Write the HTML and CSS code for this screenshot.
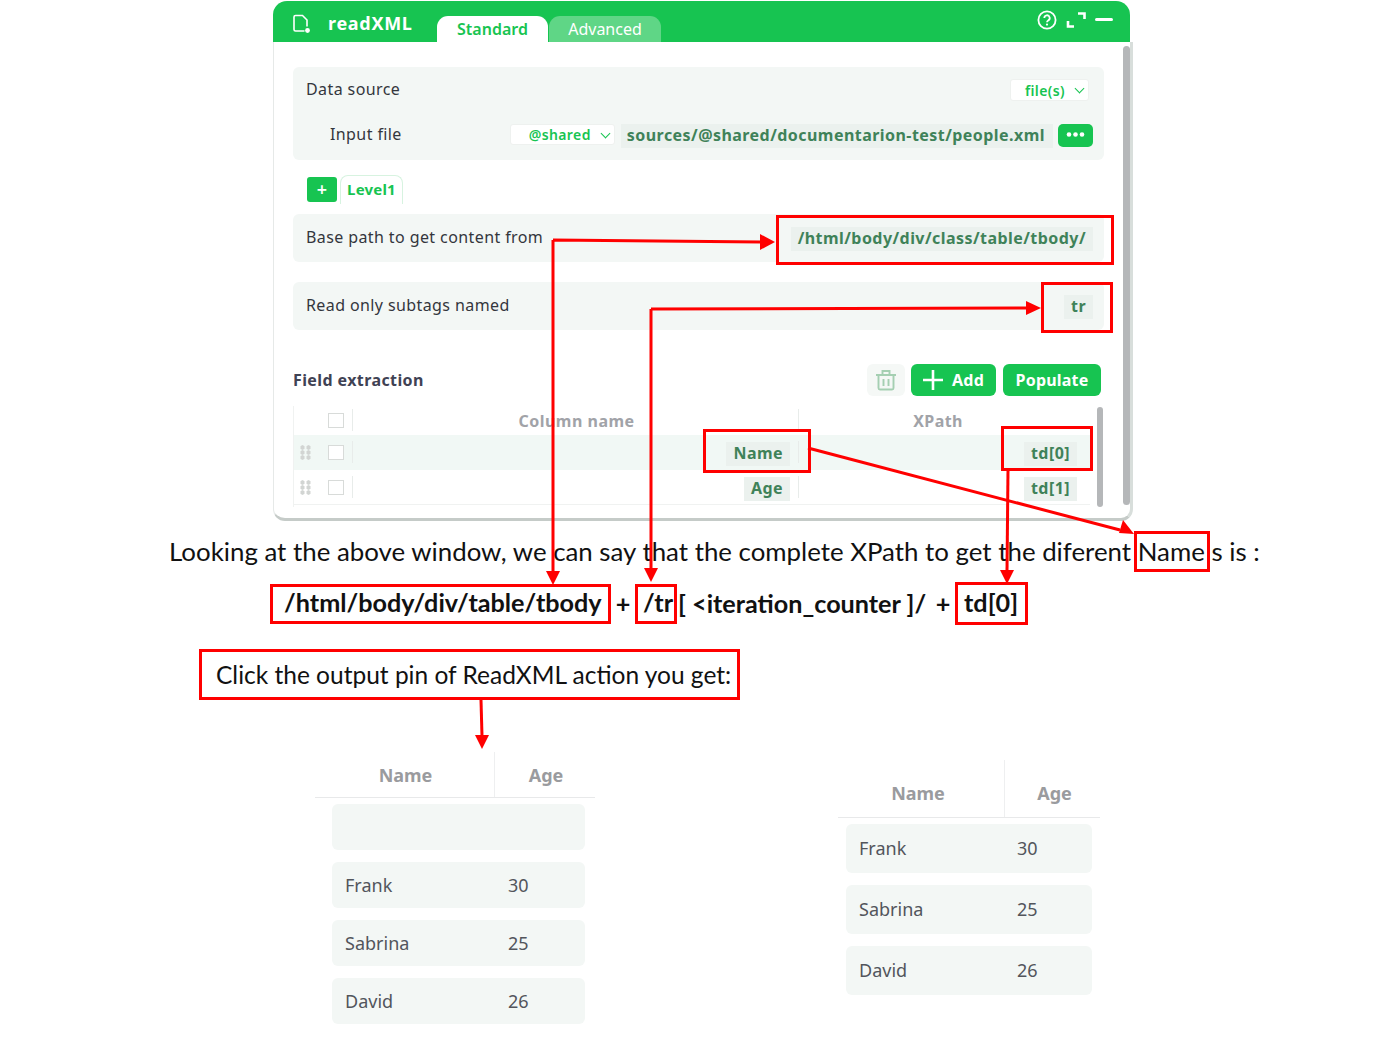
FILE: index.html

```html
<!DOCTYPE html>
<html lang="en">
<head>
    <meta charset="UTF-8">
    <meta name="viewport" content="width=device-width, initial-scale=1.0">
    <title>readXML</title>
    <link rel="stylesheet" href="styles.css">
</head>
<body>
    <div class="page">
        <div class="window">
            <div class="window-header">
                <svg class="logo" width="20" height="20" viewBox="0 0 20 20" fill="none" stroke="#fff" stroke-width="1.600">
                    <path d="M12.500 17H3.500A1.500 1.500 0 0 1 2 15.500V3a1.500 1.500 0 0 1 1.500-1.500h7l4.500 4.500v6.500"/>
                    <circle cx="15.500" cy="16.500" r="2.400" fill="#fff" stroke="none"/>
                </svg>
                <span class="window-title">readXML</span>
                <div class="tabs">
                    <div class="tab active">Standard</div>
                    <div class="tab">Advanced</div>
                </div>
                <div class="window-tools">
                    <svg width="20" height="20" viewBox="0 0 20 20" fill="none" stroke="#fff" stroke-width="1.800">
                        <circle cx="10" cy="10" r="8.600"/>
                        <path d="M7.300 8a2.700 2.700 0 1 1 3.900 2.400c-.8.500-1.200 1-1.200 1.800"/>
                        <circle cx="10" cy="14.600" r="1.100" fill="#fff" stroke="none"/>
                    </svg>
                    <svg width="20" height="16" viewBox="0 0 20 16" fill="none" stroke="#fff" stroke-width="2.600">
                        <path d="M2 9v5.500h6M12 1.500h6.500V7"/>
                    </svg>
                    <svg width="18" height="4" viewBox="0 0 18 4"><rect width="18" height="3" rx="1.500" fill="#fff"/></svg>
                </div>
            </div>
            <div class="window-body">
                <div class="scrollbar"></div>
                <div class="panel source-panel">
                    <div class="panel-row">
                        <span class="label">Data source</span>
                        <div class="select file-select">file(s) <span class="chev"></span></div>
                    </div>
                    <div class="panel-row input-row">
                        <span class="label">Input file</span>
                        <div class="input-group">
                            <div class="select shared-select">@shared <span class="chev"></span></div>
                            <div class="value path-value">sources/@shared/documentarion-test/people.xml</div>
                            <div class="dots-btn">
                                <svg width="19" height="5" viewBox="0 0 19 5" fill="#fff">
                                    <circle cx="3" cy="2.500" r="2.300"/>
                                    <circle cx="9.500" cy="2.500" r="2.300"/>
                                    <circle cx="16" cy="2.500" r="2.300"/>
                                </svg>
                            </div>
                        </div>
                    </div>
                </div>
                <div class="levels">
                    <div class="level-add">+</div>
                    <div class="level-tab">Level1</div>
                </div>
                <div class="panel short-panel">
                    <span class="label">Base path to get content from</span>
                    <div class="value">/html/body/div/class/table/tbody/</div>
                </div>
                <div class="panel short-panel">
                    <span class="label">Read only subtags named</span>
                    <div class="value">tr</div>
                </div>
                <div class="fields-head">
                    <span class="fields-title">Field extraction</span>
                    <div class="fields-actions">
                        <div class="trash-btn">
                            <svg width="22" height="22" viewBox="0 0 22 22" fill="none" stroke="#a5cfb2" stroke-width="1.900">
                                <path d="M1 6h20M3.500 6v13A1.500 1.500 0 0 0 5 20.500h12a1.500 1.500 0 0 0 1.500-1.500V6M7.500 6V2h7v4M8.500 10v7M13.500 10v7"/>
                            </svg>
                        </div>
                        <div class="btn add-btn">
                            <svg width="20" height="20" viewBox="0 0 20 20" stroke="#fff" stroke-width="2.600"><path d="M10 0v20M0 10h20"/></svg>
                            Add
                        </div>
                        <div class="btn populate-btn">Populate</div>
                    </div>
                </div>
                <div class="grid-wrap">
                    <div class="grid">
                        <div class="grid-row grid-head">
                            <div class="drag"></div>
                            <div class="check-cell"><span class="check"></span></div>
                            <div class="col-name"><span class="col-title">Column name</span></div>
                            <div class="col-path"><span class="col-title">XPath</span></div>
                        </div>
                        <div class="grid-row grid-hover">
                            <div class="drag"><span class="dots"></span></div>
                            <div class="check-cell"><span class="check"></span></div>
                            <div class="col-name"><span class="value">Name</span></div>
                            <div class="col-path"><span class="value">td[0]</span></div>
                        </div>
                        <div class="grid-row">
                            <div class="drag"><span class="dots"></span></div>
                            <div class="check-cell"><span class="check"></span></div>
                            <div class="col-name"><span class="value">Age</span></div>
                            <div class="col-path"><span class="value">td[1]</span></div>
                        </div>
                    </div>
                    <div class="grid-scroll"></div>
                </div>
            </div>
        </div>

        <p class="caption">Looking at the above window, we can say that the complete XPath to get the diferent Name s is :</p>

        <div class="formula">
            <span class="boxed first-part">/html/body/div/table/tbody</span>
            <span class="op">+</span>
            <span class="boxed tr-part">/tr</span>
            <span class="iter">[ &lt;iteration_counter ]/</span>
            <span class="op">+</span>
            <span class="boxed td-part">td[0]</span>
        </div>

        <div class="callout">Click the output pin of ReadXML action you get:</div>

        <div class="results">
            <div class="result result-left">
                <div class="result-head">
                    <div class="head-name">Name</div>
                    <div class="head-age">Age</div>
                </div>
                <div class="result-row"></div>
                <div class="result-row"><span class="cell-name">Frank</span><span>30</span></div>
                <div class="result-row"><span class="cell-name">Sabrina</span><span>25</span></div>
                <div class="result-row"><span class="cell-name">David</span><span>26</span></div>
            </div>
            <div class="result result-right">
                <div class="result-head">
                    <div class="head-name">Name</div>
                    <div class="head-age">Age</div>
                </div>
                <div class="result-row"><span class="cell-name">Frank</span><span>30</span></div>
                <div class="result-row"><span class="cell-name">Sabrina</span><span>25</span></div>
                <div class="result-row"><span class="cell-name">David</span><span>26</span></div>
            </div>
        </div>

        <!-- red annotations drawn over the screenshot -->
        <svg class="annotations" width="1400" height="1050" viewBox="0 0 1400 1050" fill="none" stroke="#ff0000" stroke-width="3">
            <rect x="777.500" y="216.500" width="335" height="47"/>
            <rect x="1042.500" y="283.500" width="69" height="48"/>
            <rect x="704.500" y="430.500" width="105" height="41"/>
            <rect x="1002.500" y="427.500" width="89" height="42"/>
            <rect x="1135.500" y="532.500" width="73" height="38"/>
            <path d="M553 240l208 2M553 240v331"/>
            <path d="M651 309l376-1M651 309v259"/>
            <path d="M808 448l312 82"/>
            <path d="M1008 470l-1 101"/>
            <path d="M481 700l1 36"/>
            <g fill="#ff0000" stroke="none">
                <path d="M775 242l-15-8v16z"/>
                <path d="M553 585l-7-14h14z"/>
                <path d="M1041 308l-15-7v14z"/>
                <path d="M651 582l-7-14h14z"/>
                <path d="M1134 534l-15-1 4-13z"/>
                <path d="M1007 584l-7-14h14z"/>
                <path d="M482 749l-7-14h14z"/>
            </g>
        </svg>
    </div>
</body>
</html>
```

FILE: styles.css

```css
:root {
    --green: #17c451;
    --green-soft: #5fd686;
    --panel: #f3f7f5;
    --value-bg: #ebf1ee;
    --value-text: #3f8259;
    --text: #33363d;
    --muted: #a1a3a8;
    --red: #ff0000;
}

* {
    box-sizing: border-box;
    margin: 0;
    padding: 0;
}

body {
    font-family: 'Noto Sans', sans-serif;
    background-color: white;
    color: var(--text);
}

.page {
    position: relative;
    width: 1400px;
    height: 1050px;
    overflow: hidden;
}

.annotations {
    position: absolute;
    top: 0;
    left: 0;
}

/* window */
.window {
    width: 860px;
    height: 521px;
    margin: 1px 0 0 273px;
}

.window-header {
    display: flex;
    align-items: flex-start;
    width: 857px;
    height: 41px;
    padding-left: 19px;
    background-color: var(--green);
    border-radius: 14px 14px 0 0;
    color: white;
}

.logo {
    flex-shrink: 0;
    margin-top: 13px;
}

.window-title {
    width: 85px;
    margin: 10px 0 0 16px;
    font-size: 18px;
    font-weight: 700;
    letter-spacing: 0.7px;
}

.tabs {
    display: flex;
    gap: 1px;
    margin: 15px 0 0 24px;
}

.tab {
    width: 112px;
    height: 26px;
    padding-top: 2px;
    background-color: var(--green-soft);
    border-radius: 11px 11px 0 0;
    font-size: 16px;
    text-align: center;
}

.tab.active {
    width: 111px;
    background-color: white;
    color: var(--green);
    font-weight: 600;
}

.window-tools {
    display: flex;
    align-items: center;
    gap: 9px;
    margin: 9px 17px 0 auto;
}

.window-body {
    position: relative;
    height: 479px;
    padding: 25px 24px 0 19px;
    background-color: white;
    border-left: 1px solid #e6e9e8;
    border-right: 3px solid #d8dedb;
    border-bottom: 3px solid #c5cbc8;
    border-radius: 0 0 12px 12px;
}

.scrollbar {
    position: absolute;
    top: 4px;
    right: 0;
    width: 7px;
    height: 459px;
    background-color: #b5b7b9;
    border-radius: 4px;
}

/* panels */
.panel {
    width: 811px;
    background-color: var(--panel);
    border-radius: 6px;
}

.source-panel {
    height: 93px;
    padding: 12px 11px 0 13px;
}

.panel-row {
    display: flex;
    justify-content: space-between;
    height: 22px;
}

.input-row {
    align-items: flex-start;
    margin-top: 23px;
    padding-left: 24px;
}

.label {
    font-size: 16px;
    line-height: 20px;
    letter-spacing: 0.4px;
}

.select {
    display: flex;
    align-items: center;
    justify-content: flex-end;
    background-color: white;
    border: 1px solid #eef1ef;
    border-radius: 3px;
    color: var(--green);
    font-size: 14px;
    font-weight: 600;
    letter-spacing: 0.4px;
}

.file-select {
    width: 79px;
    height: 22px;
    margin-right: 4px;
    padding-right: 3px;
}

.chev {
    width: 7px;
    height: 7px;
    margin: -3px 2px 0 11px;
    border-right: 1px solid var(--green);
    border-bottom: 1px solid var(--green);
    transform: rotate(45deg);
}

.input-group {
    display: flex;
    gap: 5px;
    width: 583px;
}

.shared-select {
    width: 105px;
    height: 21px;
    margin-right: 1px;
    padding-right: 3px;
}

.value {
    display: inline-block;
    height: 24px;
    padding: 0 7px;
    background-color: var(--value-bg);
    color: var(--value-text);
    font-size: 16px;
    font-weight: 700;
    line-height: 23px;
    letter-spacing: 0.45px;
    white-space: nowrap;
}

.path-value {
    width: 433px;
    padding: 0 6px;
    letter-spacing: 0.45px;
}

.dots-btn {
    display: flex;
    align-items: center;
    justify-content: center;
    width: 35px;
    height: 23px;
    padding-bottom: 3px;
    background-color: var(--green);
    border-radius: 5px;
}

.levels {
    display: flex;
    align-items: flex-end;
    gap: 3px;
    height: 54px;
    padding: 0 0 12px 14px;
}

.level-add {
    width: 30px;
    height: 25px;
    background-color: var(--green);
    border-radius: 3px;
    color: white;
    font-size: 18px;
    font-weight: 600;
    line-height: 25px;
    text-align: center;
}

.level-tab {
    width: 63px;
    height: 29px;
    margin-bottom: -2px;
    border: 1px solid #d7f3e0;
    border-bottom: none;
    border-radius: 8px 8px 0 0;
    color: var(--green);
    font-size: 15px;
    font-weight: 700;
    line-height: 27px;
    letter-spacing: 0.2px;
    text-align: center;
}

.short-panel {
    display: flex;
    align-items: flex-start;
    justify-content: space-between;
    height: 48px;
    margin-bottom: 20px;
    padding: 13px 11px 0 13px;
}

/* field table */
.fields-head {
    display: flex;
    align-items: center;
    justify-content: space-between;
    width: 808px;
    height: 32px;
    margin-top: 34px;
}

.fields-title {
    color: #3f4254;
    font-size: 16px;
    font-weight: 700;
    letter-spacing: 0.4px;
}

.fields-actions {
    display: flex;
    gap: 7px;
}

.trash-btn {
    display: flex;
    align-items: center;
    justify-content: center;
    width: 38px;
    height: 32px;
    margin-right: -1px;
    background-color: #f5f8f6;
    border-radius: 6px;
}

.btn {
    display: flex;
    align-items: center;
    justify-content: center;
    height: 32px;
    background-color: var(--green);
    border-radius: 6px;
    color: white;
    font-size: 16px;
    font-weight: 700;
    letter-spacing: 0.2px;
}

.add-btn {
    gap: 9px;
    width: 85px;
}

.populate-btn {
    width: 98px;
}

.grid-wrap {
    display: flex;
    margin-top: 10px;
}

.grid {
    flex-shrink: 0;
    width: 804px;
    height: 101px;
    padding-right: 7px;
    border-left: 1px solid #f0f2f1;
}

.grid-row {
    display: flex;
    align-items: center;
    height: 35px;
    border-bottom: 1px solid transparent;
}

.grid-row:last-child {
    border-bottom-color: #f0f2f1;
}

.grid-head {
    height: 29px;
}

.grid-hover {
    background-color: #f1f8f5;
}

.drag {
    width: 34px;
    padding-left: 6px;
}

.dots {
    display: block;
    width: 11px;
    height: 15px;
    background-image: radial-gradient(circle, #d2d5d3 2px, transparent 2.4px);
    background-size: 6px 5px;
    background-position: -0.5px 0;
}

.check-cell {
    display: flex;
    align-items: center;
    width: 25px;
    height: 22px;
    border-right: 1px solid #e8ecea;
}

.check {
    width: 16px;
    height: 15px;
    background-color: white;
    border: 1px solid #d8dbd9;
}

.col-name,
.col-path {
    display: flex;
    align-items: center;
    justify-content: flex-end;
    height: 22px;
    padding-right: 8px;
    font-size: 16px;
    font-weight: 700;
    letter-spacing: 0.4px;
}

.col-name {
    width: 446px;
    border-right: 1px solid #e8ecea;
}

.col-path {
    width: 286px;
}

.col-name .value,
.col-path .value {
    margin-top: 4px;
}

.grid-head .col-name,
.grid-head .col-path {
    justify-content: center;
    color: var(--muted);
}

.grid-head .col-name {
    padding: 0 0 0 2px;
    letter-spacing: 0.5px;
}

.col-title {
    margin-top: 2px;
}

.grid-scroll {
    flex-shrink: 0;
    width: 6px;
    height: 100px;
    margin-top: 1px;
    background-color: #b5b7b9;
    border-radius: 3px;
}

/* caption under the window */
.caption {
    margin: 13px 0 0 169px;
    color: #111;
    font-family: 'Lato', sans-serif;
    font-size: 25.850px;
    line-height: 32px;
    white-space: nowrap;
}

.formula {
    display: flex;
    align-items: center;
    height: 43px;
    margin: 15px 0 0 270px;
    color: #111;
    font-family: 'Lato', sans-serif;
    font-size: 25.200px;
    font-weight: 700;
    white-space: nowrap;
}

.boxed {
    height: 40px;
    border: 3px solid var(--red);
    line-height: 30px;
}

.first-part {
    width: 341px;
    padding-left: 11px;
}

.tr-part {
    width: 42px;
    padding-left: 5px;
}

.td-part {
    width: 73px;
    height: 43px;
    padding-left: 6px;
    line-height: 35px;
}

.op {
    width: 24px;
    margin-top: -2px;
    text-align: center;
}

.iter {
    width: 254px;
    margin-top: -2px;
    padding-left: 1px;
    font-size: 25.200px;
}

.callout {
    width: 541px;
    height: 51px;
    margin: 24px 0 0 199px;
    padding-left: 14px;
    border: 3px solid var(--red);
    color: #111;
    font-family: 'Lato', sans-serif;
    font-size: 24.500px;
    line-height: 46px;
    white-space: nowrap;
}

/* output tables */
.results {
    display: flex;
    align-items: flex-start;
    margin-top: 52px;
}

.result {
    color: #52555c;
    font-size: 18px;
}

.result-left {
    width: 280px;
    margin-left: 315px;
}

.result-right {
    width: 262px;
    margin: 8px 0 0 243px;
}

.result-head {
    display: flex;
    border-bottom: 1px solid #e8e9ea;
    color: #9a9b9e;
    font-size: 18px;
    font-weight: 700;
    text-align: center;
}

.result-left .result-head {
    height: 46px;
    margin-bottom: 6px;
    line-height: 46px;
}

.result-right .result-head {
    height: 58px;
    margin-bottom: 6px;
    line-height: 66px;
}

.head-name {
    border-right: 1px solid #eeeff0;
}

.result-left .head-name {
    width: 180px;
    padding-left: 2px;
}

.result-left .head-age {
    width: 100px;
    padding-left: 2px;
}

.result-right .head-name {
    width: 167px;
    padding-right: 6px;
}

.result-right .head-age {
    width: 95px;
    padding-left: 4px;
}

.result-row {
    display: flex;
    align-items: center;
    background-color: var(--panel);
    border-radius: 6px;
}

.result-left .result-row {
    width: 253px;
    height: 46px;
    margin: 0 0 12px 17px;
    padding-left: 13px;
}

.result-right .result-row {
    width: 246px;
    height: 49px;
    margin: 0 0 12px 8px;
    padding: 0 0 2px 13px;
}

.result-left .cell-name {
    width: 163px;
}

.result-right .cell-name {
    width: 158px;
}
```
